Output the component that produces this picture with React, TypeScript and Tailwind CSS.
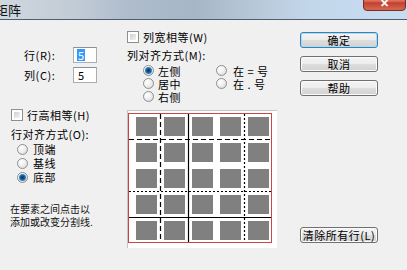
import React from "react";

function Radio({ checked, label, gap = "ml-[4px]" }: { checked?: boolean; label: string; gap?: string }) {
  return (
    <div className="flex items-center h-[13px] whitespace-pre">
      <span className="w-[11px] h-[11px] shrink-0 rounded-full border border-[#8e8f8f] bg-[radial-gradient(circle_at_35%_30%,#ffffff_0%,#f0f0f0_45%,#d2d2d2_100%)] flex items-center justify-center">
        {checked && (
          <span className="w-[7px] h-[7px] rounded-full bg-[radial-gradient(circle,#0a3358_0%,#14548c_35%,#3a8fd0_70%,#8cc8ef_100%)]" />
        )}
      </span>
      <span className={`${gap} text-[11px] leading-[12px] tracking-[0.5px]`}>{label}</span>
    </div>
  );
}

function Check({ label }: { label: string }) {
  return (
    <div className="flex items-center h-[12px]">
      <span className="w-[12px] h-[12px] shrink-0 border border-[#8e8f8f] bg-white p-[2px]">
        <span className="block w-full h-full bg-[linear-gradient(135deg,#cfcfcf,#f4f4f4)]" />
      </span>
      <span className="ml-[4px] text-[11px] leading-[12px] tracking-[0.5px]">{label}</span>
    </div>
  );
}

function Btn({ label, def, extra = "" }: { label: string; def?: boolean; extra?: string }) {
  return (
    <div
      className={`w-[78px] h-[16px] rounded-[3px] border flex items-center justify-center text-[11px] leading-[13px] tracking-[0.5px] bg-[linear-gradient(#f4f4f4_0%,#ececec_50%,#dedede_50%,#d2d2d2_100%)] ${
        def ? "border-[#3c7fb1] shadow-[inset_0_0_0_1px_#a8dcf8]" : "border-[#707070] shadow-[inset_0_0_0_1px_#fbfbfb]"
      } ${extra}`}
    >
      {label}
    </div>
  );
}

function Preview() {
  const xs = [8, 36, 64, 92, 120];
  const ys = [6, 32, 58, 84, 110];
  return (
    <svg width="149" height="137" viewBox="0 0 149 137" className="block">
      {ys.map((y) =>
        xs.map((x) => <rect key={`${x}-${y}`} x={x} y={y} width="21" height="19" fill="#808080" />)
      )}
      <rect x="0.5" y="2.5" width="143" height="129" fill="none" stroke="#c84646" strokeWidth="1" />
      <line x1="32.5" y1="3" x2="32.5" y2="131" stroke="#000" strokeWidth="1.2" strokeDasharray="5 3" />
      <line x1="60.5" y1="3" x2="60.5" y2="131" stroke="#000" strokeWidth="1.2" />
      <line x1="116.5" y1="3" x2="116.5" y2="131" stroke="#000" strokeWidth="1.2" strokeDasharray="2 2" />
      <line x1="1" y1="28.5" x2="143" y2="28.5" stroke="#000" strokeWidth="1.2" strokeDasharray="5 3" />
      <line x1="1" y1="80.5" x2="143" y2="80.5" stroke="#000" strokeWidth="1.2" strokeDasharray="2 2" />
      <line x1="1" y1="106.5" x2="143" y2="106.5" stroke="#000" strokeWidth="1.2" />
    </svg>
  );
}

export default function App() {
  return (
    <div className="w-[407px] h-[270px] overflow-hidden bg-[#f0f0f0] text-black flex flex-col font-[family-name:'Noto_Sans_CJK_SC',sans-serif]">
      {/* title bar */}
      <div className="h-[20px] shrink-0 flex items-start overflow-hidden border-b border-[#4f5e6e] bg-[linear-gradient(to_right,#cfd7df_0%,#c2ccd6_18%,#aebccb_32%,#a6b6c6_48%,#b5c5d5_60%,#c3d7eb_76%,#c7dcf1_100%)]">
        <span className="ml-[-5px] mt-[2px] text-[13px] leading-[16px] text-[#141414]">矩阵</span>
        <div className="ml-auto mr-[1px] mt-[-7px] w-[43px] h-[18px] shrink-0 rounded-b-[4px] border border-[#7d2a22] bg-[linear-gradient(#e9a899_0%,#d86a56_45%,#c4402d_55%,#d26a52_100%)] flex items-center justify-center text-white text-[11px] font-bold leading-none">
          ✕
        </div>
      </div>

      {/* body */}
      <div className="flex-1 flex">
        {/* left column */}
        <div className="w-[127px] shrink-0 flex flex-col">
          <div className="mt-[27px] h-[16px] flex items-center">
            <span className="pl-[24px] w-[73px] text-[11px] leading-[13px] tracking-[0.6px]">行(R):</span>
            <div className="w-[24px] h-[16px] border border-[#abadb3] border-t-[#8e9099] bg-white flex items-center pl-[3px]">
              <span className="bg-[#3399ff] text-white text-[11px] leading-[12px] px-[1px]">5</span>
            </div>
          </div>
          <div className="mt-[4px] h-[16px] flex items-center">
            <span className="pl-[24px] w-[73px] text-[11px] leading-[13px] tracking-[0.6px]">列(C):</span>
            <div className="w-[24px] h-[16px] border border-[#abadb3] border-t-[#8e9099] bg-white flex items-center pl-[4px]">
              <span className="text-[11px] leading-[12px]">5</span>
            </div>
          </div>
          <div className="mt-[26px] pl-[11px]">
            <Check label="行高相等(H)" />
          </div>
          <div className="mt-[6px] pl-[11px] h-[14px] flex items-center text-[11px] leading-[13px] tracking-[0.5px]">行对齐方式(O):</div>
          <div className="mt-[1px] pl-[17px] flex flex-col">
            <div className="h-[14px] flex items-center"><Radio label="顶端" gap="ml-[5px]" /></div>
            <div className="h-[14px] flex items-center"><Radio label="基线" gap="ml-[5px]" /></div>
            <div className="h-[14px] flex items-center"><Radio label="底部" checked gap="ml-[5px]" /></div>
          </div>
          <div className="mt-[18px] pl-[10px] text-[10px] leading-[13px] text-[#111]">
            <div>在要素之间点击以</div>
            <div>添加或改变分割线.</div>
          </div>
        </div>

        {/* middle column */}
        <div className="w-[150px] shrink-0 flex flex-col">
          <div className="mt-[11px]">
            <Check label="列宽相等(W)" />
          </div>
          <div className="mt-[5px] h-[14px] flex items-center text-[11px] leading-[13px] tracking-[0.5px]">列对齐方式(M):</div>
          <div className="mt-[2px] pl-[16px] flex">
            <div className="w-[73px] flex flex-col">
              <Radio label="左侧" checked />
              <Radio label="居中" />
              <Radio label="右侧" />
            </div>
            <div className="flex flex-col">
              <Radio label="在 = 号" gap="ml-[6px]" />
              <Radio label="在 . 号" gap="ml-[6px]" />
            </div>
          </div>
          <div className="mt-[7px] w-[150px] h-[138px] border-l border-t border-[#c6c6c6] bg-white">
            <Preview />
          </div>
        </div>

        {/* right column */}
        <div className="ml-[23px] flex flex-col">
          <Btn label="确定" def extra="mt-[12px]" />
          <Btn label="取消" extra="mt-[8px]" />
          <Btn label="帮助" extra="mt-[8px]" />
          <Btn label="清除所有行(L)" extra="mt-[131px]" />
        </div>
      </div>
    </div>
  );
}
